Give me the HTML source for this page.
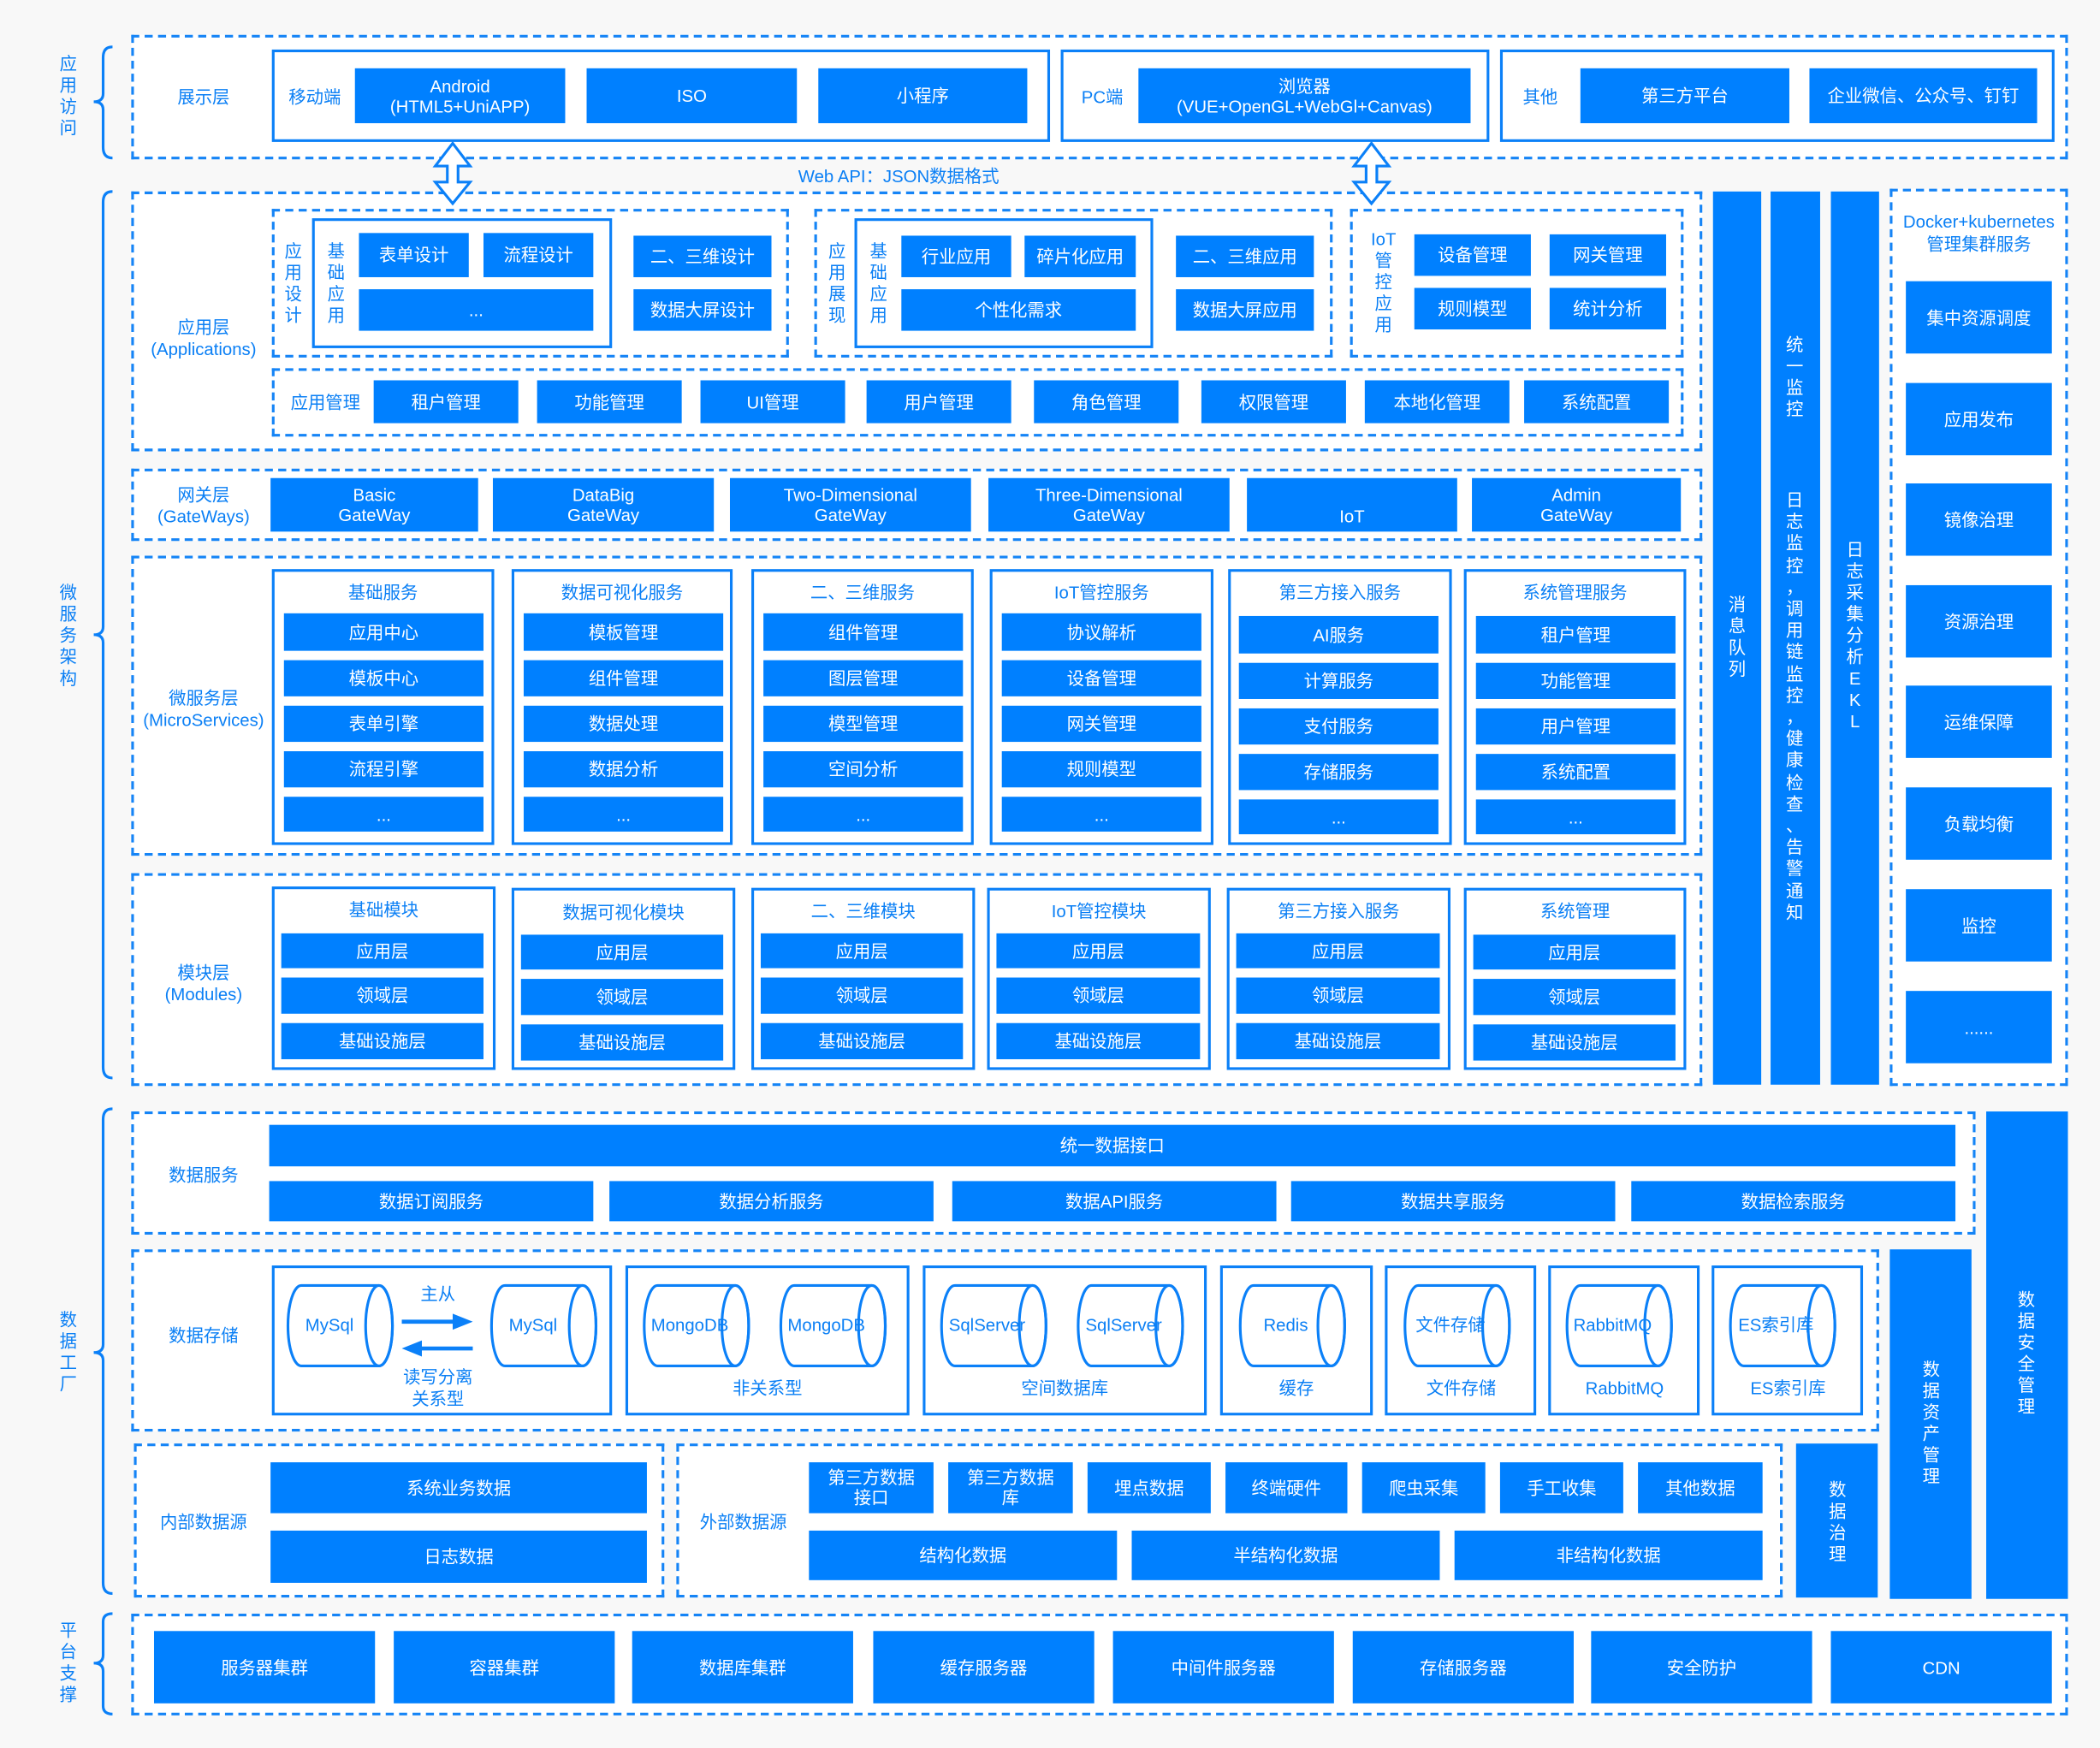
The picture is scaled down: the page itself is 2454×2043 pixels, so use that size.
<!DOCTYPE html>
<html><head><meta charset="utf-8"><style>
html,body{margin:0;padding:0}
body{width:2454px;height:2043px;overflow:hidden;background:#f8f8f8;font-family:"Liberation Sans","Noto Sans CJK SC",sans-serif}
#c{position:absolute;left:0;top:0;width:1568px;height:1305px;transform:scale(1.5651);transform-origin:0 0}
#c div{position:absolute;box-sizing:border-box}
.d{border:2px dashed #1584f6;background:#fff}
.s{border:2px solid #0b80f8;background:#fff}
.b{background:#0080ff;color:#fff;display:flex;align-items:center;justify-content:center;text-align:center;font-size:13px;line-height:15px}
.t{color:#0a7ff5;font-size:13px;line-height:16px;text-align:center;white-space:nowrap}
.v{color:#0a7ff5;font-size:13px;line-height:16px;width:14px;text-align:center}
.vb{color:#fff;font-size:13px;line-height:16px;width:14px;text-align:center}
.bar{background:#0080ff}
</style></head><body><div id="c">
<svg width="1568" height="1305" style="position:absolute;left:0;top:0" fill="none" stroke="#0b80f8" stroke-width="2">
<path d="M84 35 Q77 35 77 43 L77 70 Q77 76 70 76 Q77 76 77 82 L77 110 Q77 118 84 118"/>
<path d="M84 143 Q77 143 77 151 L77 468 Q77 474 70 474 Q77 474 77 480 L77 797 Q77 805 84 805"/>
<path d="M84 828 Q77 828 77 836 L77 1004 Q77 1010 70 1010 Q77 1010 77 1016 L77 1182 Q77 1190 84 1190"/>
<path d="M84 1205 Q77 1205 77 1211 L77 1236 Q77 1242 70 1242 Q77 1242 77 1248 L77 1274 Q77 1280 84 1280"/>
</svg>
<div class="v" style="left:44px;top:40px">应<br>用<br>访<br>问</div>
<div class="v" style="left:44px;top:435px">微<br>服<br>务<br>架<br>构</div>
<div class="v" style="left:44px;top:978px">数<br>据<br>工<br>厂</div>
<div class="v" style="left:44px;top:1210px">平<br>台<br>支<br>撑</div>

<!-- section 1 -->
<div class="d" style="left:98px;top:26px;width:1446px;height:93px"></div>
<div class="t" style="left:122px;top:65px;width:60px">展示层</div>
<div class="s" style="left:203px;top:37px;width:581px;height:69px"></div>
<div class="t" style="left:210px;top:65px;width:50px">移动端</div>
<div class="b" style="left:265px;top:51px;width:157px;height:41px">Android<br>(HTML5+UniAPP)</div>
<div class="b" style="left:438px;top:51px;width:157px;height:41px">ISO</div>
<div class="b" style="left:611px;top:51px;width:156px;height:41px">小程序</div>
<div class="s" style="left:792px;top:37px;width:320px;height:69px"></div>
<div class="t" style="left:803px;top:65px;width:40px">PC端</div>
<div class="b" style="left:850px;top:51px;width:248px;height:41px">浏览器<br>(VUE+OpenGL+WebGl+Canvas)</div>
<div class="s" style="left:1120px;top:37px;width:414px;height:69px"></div>
<div class="t" style="left:1130px;top:65px;width:40px">其他</div>
<div class="b" style="left:1180px;top:51px;width:156px;height:41px">第三方平台</div>
<div class="b" style="left:1351px;top:51px;width:170px;height:41px">企业微信、公众号、钉钉</div>

<!-- section 2 -->
<div class="d" style="left:98px;top:143px;width:1173px;height:194px"></div>
<div class="t" style="left:102px;top:237px;width:100px">应用层<br>(Applications)</div>
<div class="d" style="left:203px;top:156px;width:386px;height:111px"></div>
<div class="v" style="left:212px;top:180px">应<br>用<br>设<br>计</div>
<div class="s" style="left:233px;top:163px;width:224px;height:97px"></div>
<div class="v" style="left:244px;top:180px">基<br>础<br>应<br>用</div>
<div class="b" style="left:268px;top:174px;width:82px;height:33px">表单设计</div>
<div class="b" style="left:361px;top:174px;width:82px;height:33px">流程设计</div>
<div class="b" style="left:268px;top:216px;width:175px;height:31px">...</div>
<div class="b" style="left:473px;top:176px;width:103px;height:31px">二、三维设计</div>
<div class="b" style="left:473px;top:216px;width:103px;height:31px">数据大屏设计</div>
<div class="d" style="left:608px;top:156px;width:387px;height:111px"></div>
<div class="v" style="left:618px;top:180px">应<br>用<br>展<br>现</div>
<div class="s" style="left:638px;top:163px;width:223px;height:97px"></div>
<div class="v" style="left:649px;top:180px">基<br>础<br>应<br>用</div>
<div class="b" style="left:673px;top:176px;width:82px;height:31px">行业应用</div>
<div class="b" style="left:765px;top:176px;width:83px;height:31px">碎片化应用</div>
<div class="b" style="left:673px;top:216px;width:175px;height:31px">个性化需求</div>
<div class="b" style="left:878px;top:176px;width:103px;height:31px">二、三维应用</div>
<div class="b" style="left:878px;top:216px;width:103px;height:31px">数据大屏应用</div>
<div class="d" style="left:1008px;top:156px;width:249px;height:111px"></div>
<div class="v" style="left:1022px;top:171px;width:22px">IoT<br>管<br>控<br>应<br>用</div>
<div class="b" style="left:1056px;top:175px;width:87px;height:31px">设备管理</div>
<div class="b" style="left:1157px;top:175px;width:87px;height:31px">网关管理</div>
<div class="b" style="left:1056px;top:215px;width:87px;height:31px">规则模型</div>
<div class="b" style="left:1157px;top:215px;width:87px;height:31px">统计分析</div>
<div class="d" style="left:203px;top:275px;width:1054px;height:51px"></div>
<div class="t" style="left:213px;top:293px;width:60px">应用管理</div>
<div class="b" style="left:279px;top:284px;width:108px;height:32px">租户管理</div>
<div class="b" style="left:401px;top:284px;width:108px;height:32px">功能管理</div>
<div class="b" style="left:523px;top:284px;width:108px;height:32px">UI管理</div>
<div class="b" style="left:647px;top:284px;width:108px;height:32px">用户管理</div>
<div class="b" style="left:772px;top:284px;width:108px;height:32px">角色管理</div>
<div class="b" style="left:897px;top:284px;width:108px;height:32px">权限管理</div>
<div class="b" style="left:1019px;top:284px;width:108px;height:32px">本地化管理</div>
<div class="b" style="left:1138px;top:284px;width:108px;height:32px">系统配置</div>

<!-- arrows -->
<svg width="1568" height="1305" style="position:absolute;left:0;top:0" stroke="#0b80f8" stroke-width="2" fill="#fff">
<polygon points="338,107 325,124 334,124 334,136 325,136 338,152 351,136 342,136 342,124 351,124"/>
<polygon points="1024,107 1011,124 1020,124 1020,136 1011,136 1024,152 1037,136 1028,136 1028,124 1037,124"/>
</svg>
<div class="t" style="left:560px;top:124px;width:222px">Web API：JSON数据格式</div>

<!-- gateway -->
<div class="d" style="left:98px;top:350px;width:1173px;height:54px"></div>
<div class="t" style="left:102px;top:362px;width:100px">网关层<br>(GateWays)</div>
<div class="b" style="left:202px;top:357px;width:155px;height:40px">Basic<br>GateWay</div>
<div class="b" style="left:368px;top:357px;width:165px;height:40px">DataBig<br>GateWay</div>
<div class="b" style="left:545px;top:357px;width:180px;height:40px">Two-Dimensional<br>GateWay</div>
<div class="b" style="left:738px;top:357px;width:180px;height:40px">Three-Dimensional<br>GateWay</div>
<div class="b" style="left:931px;top:357px;width:157px;height:40px;padding-top:16px">IoT</div>
<div class="b" style="left:1099px;top:357px;width:156px;height:40px">Admin<br>GateWay</div>

<!-- microservices -->
<div class="d" style="left:98px;top:415px;width:1173px;height:224px"></div>
<div class="t" style="left:102px;top:514px;width:100px">微服务层<br>(MicroServices)</div>
<div class="s" style="left:203px;top:425px;width:166px;height:206px"></div>
<div class="t" style="left:203px;top:435px;width:166px">基础服务</div>
<div class="b" style="left:212px;top:458px;width:149px;height:28px">应用中心</div>
<div class="b" style="left:212px;top:493px;width:149px;height:27px">模板中心</div>
<div class="b" style="left:212px;top:527px;width:149px;height:27px">表单引擎</div>
<div class="b" style="left:212px;top:561px;width:149px;height:27px">流程引擎</div>
<div class="b" style="left:212px;top:595px;width:149px;height:26px">...</div>
<div class="s" style="left:382px;top:425px;width:165px;height:206px"></div>
<div class="t" style="left:382px;top:435px;width:165px">数据可视化服务</div>
<div class="b" style="left:391px;top:458px;width:149px;height:28px">模板管理</div>
<div class="b" style="left:391px;top:493px;width:149px;height:27px">组件管理</div>
<div class="b" style="left:391px;top:527px;width:149px;height:27px">数据处理</div>
<div class="b" style="left:391px;top:561px;width:149px;height:27px">数据分析</div>
<div class="b" style="left:391px;top:595px;width:149px;height:26px">...</div>
<div class="s" style="left:561px;top:425px;width:166px;height:206px"></div>
<div class="t" style="left:561px;top:435px;width:166px">二、三维服务</div>
<div class="b" style="left:570px;top:458px;width:149px;height:28px">组件管理</div>
<div class="b" style="left:570px;top:493px;width:149px;height:27px">图层管理</div>
<div class="b" style="left:570px;top:527px;width:149px;height:27px">模型管理</div>
<div class="b" style="left:570px;top:561px;width:149px;height:27px">空间分析</div>
<div class="b" style="left:570px;top:595px;width:149px;height:26px">...</div>
<div class="s" style="left:739px;top:425px;width:167px;height:206px"></div>
<div class="t" style="left:739px;top:435px;width:167px">IoT管控服务</div>
<div class="b" style="left:748px;top:458px;width:149px;height:28px">协议解析</div>
<div class="b" style="left:748px;top:493px;width:149px;height:27px">设备管理</div>
<div class="b" style="left:748px;top:527px;width:149px;height:27px">网关管理</div>
<div class="b" style="left:748px;top:561px;width:149px;height:27px">规则模型</div>
<div class="b" style="left:748px;top:595px;width:149px;height:26px">...</div>
<div class="s" style="left:917px;top:425px;width:167px;height:206px"></div>
<div class="t" style="left:917px;top:435px;width:167px">第三方接入服务</div>
<div class="b" style="left:925px;top:460px;width:149px;height:28px">AI服务</div>
<div class="b" style="left:925px;top:495px;width:149px;height:27px">计算服务</div>
<div class="b" style="left:925px;top:529px;width:149px;height:27px">支付服务</div>
<div class="b" style="left:925px;top:563px;width:149px;height:27px">存储服务</div>
<div class="b" style="left:925px;top:597px;width:149px;height:26px">...</div>
<div class="s" style="left:1093px;top:425px;width:166px;height:206px"></div>
<div class="t" style="left:1093px;top:435px;width:166px">系统管理服务</div>
<div class="b" style="left:1102px;top:460px;width:149px;height:28px">租户管理</div>
<div class="b" style="left:1102px;top:495px;width:149px;height:27px">功能管理</div>
<div class="b" style="left:1102px;top:529px;width:149px;height:27px">用户管理</div>
<div class="b" style="left:1102px;top:563px;width:149px;height:27px">系统配置</div>
<div class="b" style="left:1102px;top:597px;width:149px;height:26px">...</div>

<!-- modules -->
<div class="d" style="left:98px;top:652px;width:1173px;height:159px"></div>
<div class="t" style="left:102px;top:719px;width:100px">模块层<br>(Modules)</div>
<div class="s" style="left:203px;top:662px;width:167px;height:137px"></div>
<div class="t" style="left:203px;top:672px;width:167px">基础模块</div>
<div class="b" style="left:210px;top:697px;width:151px;height:26px">应用层</div>
<div class="b" style="left:210px;top:730px;width:151px;height:27px">领域层</div>
<div class="b" style="left:210px;top:764px;width:151px;height:27px">基础设施层</div>
<div class="s" style="left:382px;top:663px;width:167px;height:136px"></div>
<div class="t" style="left:382px;top:674px;width:167px">数据可视化模块</div>
<div class="b" style="left:389px;top:698px;width:151px;height:26px">应用层</div>
<div class="b" style="left:389px;top:731px;width:151px;height:27px">领域层</div>
<div class="b" style="left:389px;top:765px;width:151px;height:27px">基础设施层</div>
<div class="s" style="left:561px;top:663px;width:167px;height:136px"></div>
<div class="t" style="left:561px;top:673px;width:167px">二、三维模块</div>
<div class="b" style="left:568px;top:697px;width:151px;height:26px">应用层</div>
<div class="b" style="left:568px;top:730px;width:151px;height:27px">领域层</div>
<div class="b" style="left:568px;top:764px;width:151px;height:27px">基础设施层</div>
<div class="s" style="left:737px;top:663px;width:167px;height:136px"></div>
<div class="t" style="left:737px;top:673px;width:167px">IoT管控模块</div>
<div class="b" style="left:744px;top:697px;width:152px;height:26px">应用层</div>
<div class="b" style="left:744px;top:730px;width:152px;height:27px">领域层</div>
<div class="b" style="left:744px;top:764px;width:152px;height:27px">基础设施层</div>
<div class="s" style="left:916px;top:663px;width:167px;height:136px"></div>
<div class="t" style="left:916px;top:673px;width:167px">第三方接入服务</div>
<div class="b" style="left:923px;top:697px;width:152px;height:26px">应用层</div>
<div class="b" style="left:923px;top:730px;width:152px;height:27px">领域层</div>
<div class="b" style="left:923px;top:764px;width:152px;height:27px">基础设施层</div>
<div class="s" style="left:1093px;top:663px;width:166px;height:136px"></div>
<div class="t" style="left:1093px;top:673px;width:166px">系统管理</div>
<div class="b" style="left:1100px;top:698px;width:151px;height:26px">应用层</div>
<div class="b" style="left:1100px;top:731px;width:151px;height:27px">领域层</div>
<div class="b" style="left:1100px;top:765px;width:151px;height:27px">基础设施层</div>

<!-- vertical bars -->
<div class="bar" style="left:1279px;top:143px;width:36px;height:667px"></div>
<div class="vb" style="left:1290px;top:444px">消<br>息<br>队<br>列</div>
<div class="bar" style="left:1322px;top:143px;width:37px;height:667px"></div>
<div class="vb" style="left:1333px;top:250px">统<br>一<br>监<br>控</div>
<div class="vb" style="left:1333px;top:366px;line-height:16.2px">日<br>志<br>监<br>控<br>，<br>调<br>用<br>链<br>监<br>控<br>，<br>健<br>康<br>检<br>查<br>、<br>告<br>警<br>通<br>知</div>
<div class="bar" style="left:1367px;top:143px;width:36px;height:667px"></div>
<div class="vb" style="left:1378px;top:403px">日<br>志<br>采<br>集<br>分<br>析<br>E<br>K<br>L</div>

<div class="d" style="left:1411px;top:141px;width:133px;height:670px"></div>
<div class="t" style="left:1411px;top:157px;width:133px;line-height:17px">Docker+kubernetes<br>管理集群服务</div>
<div class="b" style="left:1423px;top:210px;width:109px;height:54px">集中资源调度</div>
<div class="b" style="left:1423px;top:286px;width:109px;height:54px">应用发布</div>
<div class="b" style="left:1423px;top:361px;width:109px;height:54px">镜像治理</div>
<div class="b" style="left:1423px;top:437px;width:109px;height:54px">资源治理</div>
<div class="b" style="left:1423px;top:512px;width:109px;height:54px">运维保障</div>
<div class="b" style="left:1423px;top:588px;width:109px;height:54px">负载均衡</div>
<div class="b" style="left:1423px;top:664px;width:109px;height:54px">监控</div>
<div class="b" style="left:1423px;top:740px;width:109px;height:54px">......</div>

<!-- data factory -->
<div class="d" style="left:98px;top:830px;width:1377px;height:92px"></div>
<div class="t" style="left:112px;top:870px;width:80px">数据服务</div>
<div class="b" style="left:201px;top:840px;width:1259px;height:31px">统一数据接口</div>
<div class="b" style="left:201px;top:882px;width:242px;height:30px">数据订阅服务</div>
<div class="b" style="left:455px;top:882px;width:242px;height:30px">数据分析服务</div>
<div class="b" style="left:711px;top:882px;width:242px;height:30px">数据API服务</div>
<div class="b" style="left:964px;top:882px;width:242px;height:30px">数据共享服务</div>
<div class="b" style="left:1218px;top:882px;width:242px;height:30px">数据检索服务</div>
<div class="bar" style="left:1483px;top:830px;width:61px;height:364px"></div>
<div class="vb" style="left:1506px;top:963px">数<br>据<br>安<br>全<br>管<br>理</div>

<div class="d" style="left:98px;top:933px;width:1305px;height:136px"></div>
<div class="t" style="left:112px;top:990px;width:80px">数据存储</div>
<div class="s" style="left:203px;top:945px;width:254px;height:112px"></div>
<div class="s" style="left:467px;top:945px;width:212px;height:112px"></div>
<div class="s" style="left:689px;top:945px;width:212px;height:112px"></div>
<div class="s" style="left:911px;top:945px;width:114px;height:112px"></div>
<div class="s" style="left:1034px;top:945px;width:113px;height:112px"></div>
<div class="s" style="left:1156px;top:945px;width:113px;height:112px"></div>
<div class="s" style="left:1278px;top:945px;width:113px;height:112px"></div>
<svg width="1568" height="1305" style="position:absolute;left:0;top:0" fill="none" stroke="#0b80f8" stroke-width="2">
<g id="cy"><path d="M225 960 L283 960 A10 30 0 0 1 283 1020 L225 1020 A10 30 0 0 1 225 960 Z"/><ellipse cx="283" cy="990" rx="10" ry="30"/></g>
<use href="#cy" x="152"/><use href="#cy" x="266"/><use href="#cy" x="368"/><use href="#cy" x="488"/><use href="#cy" x="590"/><use href="#cy" x="711"/><use href="#cy" x="834"/><use href="#cy" x="955"/><use href="#cy" x="1077"/>
<path d="M300 987 L340 987" stroke-width="3"/><polygon points="338,981 353,987 338,993" fill="#0b80f8" stroke="none"/>
<path d="M313 1007 L353 1007" stroke-width="3"/><polygon points="315,1001 300,1007 315,1013" fill="#0b80f8" stroke="none"/>
</svg>
<div class="t" style="left:213px;top:982px;width:66px">MySql</div>
<div class="t" style="left:365px;top:982px;width:66px">MySql</div>
<div class="t" style="left:297px;top:959px;width:60px">主从</div>
<div class="t" style="left:287px;top:1021px;width:80px">读写分离<br>关系型</div>
<div class="t" style="left:479px;top:982px;width:72px">MongoDB</div>
<div class="t" style="left:581px;top:982px;width:72px">MongoDB</div>
<div class="t" style="left:533px;top:1029px;width:80px">非关系型</div>
<div class="t" style="left:701px;top:982px;width:72px">SqlServer</div>
<div class="t" style="left:803px;top:982px;width:72px">SqlServer</div>
<div class="t" style="left:755px;top:1029px;width:80px">空间数据库</div>
<div class="t" style="left:924px;top:982px;width:72px">Redis</div>
<div class="t" style="left:928px;top:1029px;width:80px">缓存</div>
<div class="t" style="left:1047px;top:982px;width:72px">文件存储</div>
<div class="t" style="left:1051px;top:1029px;width:80px">文件存储</div>
<div class="t" style="left:1168px;top:982px;width:72px">RabbitMQ</div>
<div class="t" style="left:1173px;top:1029px;width:80px">RabbitMQ</div>
<div class="t" style="left:1290px;top:982px;width:72px">ES索引库</div>
<div class="t" style="left:1295px;top:1029px;width:80px">ES索引库</div>
<div class="bar" style="left:1411px;top:933px;width:61px;height:261px"></div>
<div class="vb" style="left:1435px;top:1015px">数<br>据<br>资<br>产<br>管<br>理</div>

<div class="d" style="left:100px;top:1078px;width:396px;height:115px"></div>
<div class="t" style="left:112px;top:1129px;width:80px">内部数据源</div>
<div class="b" style="left:202px;top:1092px;width:281px;height:38px">系统业务数据</div>
<div class="b" style="left:202px;top:1143px;width:281px;height:39px">日志数据</div>
<div class="d" style="left:505px;top:1078px;width:826px;height:115px"></div>
<div class="t" style="left:515px;top:1129px;width:80px">外部数据源</div>
<div class="b" style="left:604px;top:1092px;width:93px;height:38px">第三方数据<br>接口</div>
<div class="b" style="left:708px;top:1092px;width:93px;height:38px">第三方数据<br>库</div>
<div class="b" style="left:812px;top:1092px;width:92px;height:38px">埋点数据</div>
<div class="b" style="left:915px;top:1092px;width:91px;height:38px">终端硬件</div>
<div class="b" style="left:1017px;top:1092px;width:92px;height:38px">爬虫采集</div>
<div class="b" style="left:1120px;top:1092px;width:92px;height:38px">手工收集</div>
<div class="b" style="left:1223px;top:1092px;width:93px;height:38px">其他数据</div>
<div class="b" style="left:604px;top:1143px;width:230px;height:37px">结构化数据</div>
<div class="b" style="left:845px;top:1143px;width:230px;height:37px">半结构化数据</div>
<div class="b" style="left:1086px;top:1143px;width:230px;height:37px">非结构化数据</div>
<div class="bar" style="left:1341px;top:1078px;width:61px;height:115px"></div>
<div class="vb" style="left:1365px;top:1105px">数<br>据<br>治<br>理</div>

<!-- platform -->
<div class="d" style="left:98px;top:1205px;width:1446px;height:76px"></div>
<div class="b" style="left:115px;top:1218px;width:165px;height:54px">服务器集群</div>
<div class="b" style="left:294px;top:1218px;width:165px;height:54px">容器集群</div>
<div class="b" style="left:472px;top:1218px;width:165px;height:54px">数据库集群</div>
<div class="b" style="left:652px;top:1218px;width:165px;height:54px">缓存服务器</div>
<div class="b" style="left:831px;top:1218px;width:165px;height:54px">中间件服务器</div>
<div class="b" style="left:1010px;top:1218px;width:165px;height:54px">存储服务器</div>
<div class="b" style="left:1188px;top:1218px;width:165px;height:54px">安全防护</div>
<div class="b" style="left:1367px;top:1218px;width:165px;height:54px">CDN</div>
</div></body></html>
